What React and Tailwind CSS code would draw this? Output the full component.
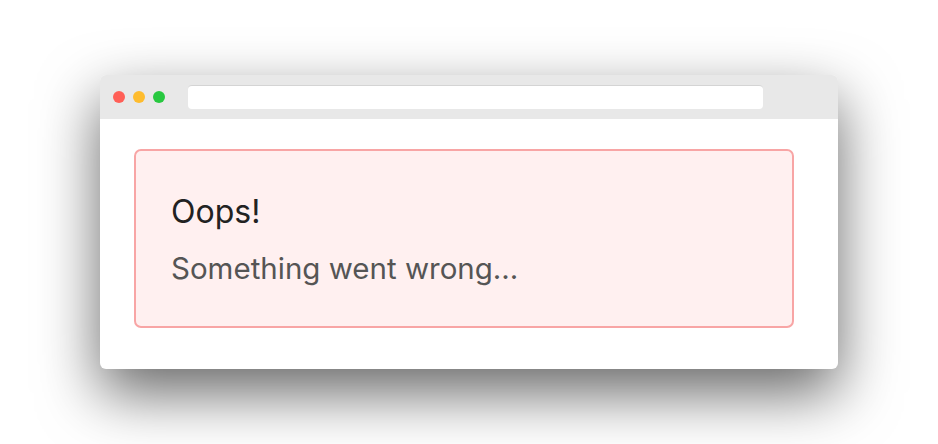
export default function App() {
  return (
    <div className="w-[938px] h-[444px] bg-white flex items-center justify-center" style={{ fontFamily: 'Inter, "Noto Sans", sans-serif' }}>
      <div className="w-[738px] h-[294px] bg-white rounded-[6px] overflow-hidden flex flex-col shadow-[0_24px_60px_rgba(0,0,0,0.6)]">
        <div className="h-[44px] bg-[#e8e8e8] flex items-center pl-[13px] shrink-0">
          <div className="flex gap-[8px]">
            <span className="w-[12px] h-[12px] rounded-full bg-[#ff5f57]" />
            <span className="w-[12px] h-[12px] rounded-full bg-[#febc2e]" />
            <span className="w-[12px] h-[12px] rounded-full bg-[#28c840]" />
          </div>
          <div className="ml-[23px] w-[575px] h-[24px] bg-white rounded-[4px] border-t border-[#d4d4d4]" />
        </div>
        <div className="flex-1 pt-[30px] pl-[34px] pr-[44px]">
          <div className="h-[179px] bg-[#fff0f0] border-[2px] border-[#f8a5a5] rounded-[7px] pl-[35px] pt-[41px]">
            <div className="text-[32px] leading-[40px] text-[#222]">Oops!</div>
            <div className="mt-[18px] text-[29.5px] leading-[36px] text-[#555]">Something went wrong...</div>
          </div>
        </div>
      </div>
    </div>
  )
}
